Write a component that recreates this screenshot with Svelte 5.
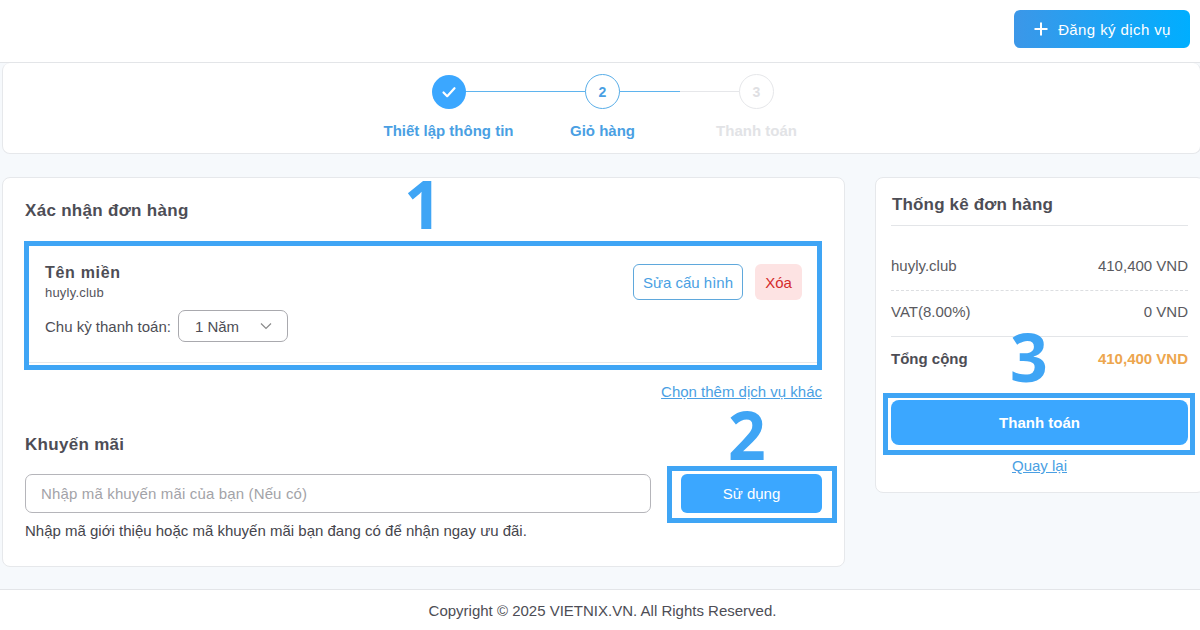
<script lang="ts">
	const steps = [
		{ label: 'Thiết lập thông tin', state: 'done', mark: '' },
		{ label: 'Giỏ hàng', state: 'active', mark: '2' },
		{ label: 'Thanh toán', state: 'todo', mark: '3' }
	];

	const rows = [
		{ name: 'huyly.club', value: '410,400 VND', dashed: true },
		{ name: 'VAT(8.00%)', value: '0 VND', dashed: false }
	];
</script>

<div class="page">
	<header class="topbar">
		<button class="register">
			<svg width="16" height="16" viewBox="0 0 16 16" aria-hidden="true">
				<path d="M8 1.5v13M1.5 8h13" stroke="#fff" stroke-width="2" fill="none" />
			</svg>
			<span>Đăng ký dịch vụ</span>
		</button>
	</header>

	<section class="stepper">
		{#each steps as step, i}
			<div class="step {step.state}">
				<div class="track">
					{#if i < steps.length - 1}
						<span class="line {step.state}"></span>
					{/if}
					<span class="circle">
						{#if step.state === 'done'}
							<svg width="16" height="16" viewBox="0 0 16 16" aria-hidden="true">
								<path d="M2.5 8.5l3.7 3.7 7.3-8" stroke="#fff" stroke-width="2.2" fill="none" stroke-linecap="round" stroke-linejoin="round" />
							</svg>
						{:else}
							{step.mark}
						{/if}
					</span>
				</div>
				<div class="step-label">{step.label}</div>
			</div>
		{/each}
	</section>

	<main class="content">
		<section class="card order">
			<h2 class="title">Xác nhận đơn hàng</h2>

			<div class="item">
				<div class="item-info">
					<h3>Tên miền</h3>
					<p class="domain">huyly.club</p>
					<div class="cycle">
						<span>Chu kỳ thanh toán:</span>
						<div class="select">
							<span>1 Năm</span>
							<svg width="12" height="8" viewBox="0 0 12 8" aria-hidden="true">
								<path d="M1 1.5l5 5 5-5" stroke="#8a8a8a" stroke-width="1.2" fill="none" />
							</svg>
						</div>
					</div>
				</div>
				<div class="item-actions">
					<button class="edit">Sửa cấu hình</button>
					<button class="remove">Xóa</button>
				</div>
			</div>

			<div class="more"><a href="#more">Chọn thêm dịch vụ khác</a></div>

			<h2 class="title promo-title">Khuyến mãi</h2>
			<div class="promo">
				<input type="text" placeholder="Nhập mã khuyến mãi của bạn (Nếu có)" />
				<button class="apply">Sử dụng</button>
			</div>
			<p class="hint">Nhập mã giới thiệu hoặc mã khuyến mãi bạn đang có để nhận ngay ưu đãi.</p>
		</section>

		<aside class="card summary">
			<h2 class="title summary-title">Thống kê đơn hàng</h2>
			{#each rows as row}
				<div class="row" class:dashed={row.dashed}>
					<span>{row.name}</span>
					<span>{row.value}</span>
				</div>
			{/each}
			<div class="row total">
				<span>Tổng cộng</span>
				<span class="amount">410,400 VND</span>
			</div>
			<button class="pay">Thanh toán</button>
			<div class="back"><a href="#back">Quay lại</a></div>
		</aside>
	</main>

	<footer class="footer">Copyright © 2025 VIETNIX.VN. All Rights Reserved.</footer>

	<div class="mark mark-1"></div>
	<div class="mark mark-2"></div>
	<div class="mark mark-3"></div>
	<span class="num num-1">1</span>
	<span class="num num-2">2</span>
	<span class="num num-3">3</span>
</div>

<style>
	:global(body) {
		margin: 0;
		background: #f6f9fc;
		overflow: hidden;
	}

	.page {
		position: relative;
		width: 1200px;
		height: 630px;
		overflow: hidden;
		font-family: 'Liberation Sans', Arial, sans-serif;
		color: #4d4d55;
		font-size: 15px;
	}

	button {
		font-family: inherit;
		cursor: pointer;
	}

	.topbar {
		box-sizing: border-box;
		background: #fff;
		border-bottom: 1px solid #e3e5e8;
		display: flex;
		justify-content: flex-end;
		padding: 10px 10px 0 0;
		height: 63px;
	}

	.register {
		width: 176px;
		height: 38px;
		border: none;
		border-radius: 6px;
		background: linear-gradient(90deg, #3c97e8, #00aeff);
		color: #fff;
		font-size: 15px;
		letter-spacing: 0.4px;
		display: flex;
		align-items: center;
		justify-content: center;
		gap: 9px;
		padding: 0;
	}

	.stepper {
		box-sizing: border-box;
		margin-left: 2px;
		width: 1199px;
		height: 91px;
		background: #fff;
		border: 1px solid #e6e8eb;
		border-top: none;
		border-radius: 8px;
		display: flex;
		justify-content: center;
		padding-top: 11px;
		padding-left: 2px;
	}

	.step {
		width: 154px;
		text-align: center;
	}

	.track {
		position: relative;
		height: 35px;
		display: flex;
		justify-content: center;
		align-items: center;
	}

	.circle {
		position: relative;
		box-sizing: border-box;
		width: 35px;
		height: 35px;
		border-radius: 50%;
		background: #fff;
		display: flex;
		align-items: center;
		justify-content: center;
		font-weight: 700;
		font-size: 14px;
	}

	.done .circle {
		width: 34px;
		height: 34px;
		background: #3ba7ff;
	}

	.active .circle {
		border: 1px solid #5aaee8;
		color: #4a9fe3;
	}

	.todo .circle {
		border: 1px solid #e6e7ea;
		color: #dfe0e3;
	}

	.line {
		position: absolute;
		left: 50%;
		width: 154px;
		top: 17px;
		height: 1px;
	}

	.line.done {
		background: #5fb4ee;
	}

	.line.active {
		background: linear-gradient(90deg, #5fb4ee 50%, #e6e7ea 50%);
	}

	.step-label {
		margin-top: 13px;
		font-weight: 700;
		font-size: 15px;
		color: #4a9fe3;
		white-space: nowrap;
	}

	.todo .step-label {
		color: #e2e3e6;
	}

	.content {
		display: grid;
		grid-template-columns: 843px 326px;
		gap: 30px;
		align-items: start;
		margin: 23px 0 0 2px;
	}

	.card {
		box-sizing: border-box;
		background: #fff;
		border: 1px solid #e6e8eb;
		border-radius: 8px;
	}

	.order {
		height: 390px;
		padding: 23px 22px 0 22px;
	}

	.title {
		margin: 0;
		font-size: 17px;
		line-height: 20px;
		font-weight: 700;
		letter-spacing: 0.3px;
		color: #4d4d55;
	}

	.item {
		margin: 26px 5px 0 4px;
		padding: 0 15px 0 16px;
		height: 116px;
		box-sizing: border-box;
		border-bottom: 1px solid #e6e8eb;
		display: flex;
		justify-content: space-between;
	}

	.item-info h3 {
		margin: 16px 0 0;
		font-size: 16px;
		line-height: 20px;
		letter-spacing: 0.7px;
		font-weight: 700;
	}

	.domain {
		margin: 2px 0 0;
		font-size: 13px;
		letter-spacing: 0.2px;
		line-height: 16px;
		color: #55555c;
	}

	.cycle {
		display: flex;
		align-items: center;
		gap: 7px;
		margin-top: 9px;
	}

	.select {
		box-sizing: border-box;
		width: 110px;
		height: 32px;
		border: 1px solid #a9a9ae;
		border-radius: 7px;
		display: flex;
		align-items: center;
		justify-content: space-between;
		padding: 0 15px 0 16px;
	}

	.item-actions {
		display: flex;
		gap: 12px;
		margin-top: 17px;
		align-items: flex-start;
	}

	.edit {
		width: 110px;
		height: 36px;
		background: #fff;
		border: 1px solid #5fa8dc;
		border-radius: 6px;
		color: #4a9fe3;
		font-size: 15px;
		padding: 0;
	}

	.remove {
		width: 47px;
		height: 36px;
		background: #fde3e3;
		border: none;
		border-radius: 6px;
		color: #d42c2c;
		font-size: 15px;
		padding: 0;
	}

	.more {
		text-align: right;
		margin-top: 21px;
		line-height: 16px;
	}

	a {
		color: #4a9fe3;
		font-size: 15px;
	}

	.promo-title {
		margin-top: 35px;
	}

	.promo {
		display: flex;
		justify-content: space-between;
		margin-top: 19px;
	}

	input {
		box-sizing: border-box;
		width: 626px;
		height: 39px;
		border: 1px solid #b5b5ba;
		border-radius: 7px;
		padding: 0 15px;
		font-family: inherit;
		font-size: 15px;
		letter-spacing: 0.15px;
		background: #fff;
		outline: none;
	}

	input::placeholder {
		color: #a3a3a8;
		opacity: 1;
	}

	.apply {
		width: 141px;
		height: 39px;
		background: #3ba7ff;
		border: none;
		border-radius: 6px;
		color: #fff;
		font-size: 15px;
		padding: 0;
	}

	.hint {
		margin: 10px 0 0;
		font-size: 15px;
		line-height: 16px;
		color: #45454c;
	}

	.summary {
		width: 330px;
		height: 316px;
		padding: 17px 15px 0 15px;
	}

	.summary-title {
		padding: 0 0 10px 1px;
		border-bottom: 1px solid #e3e5e8;
		width: 296px;
		letter-spacing: 0.15px;
	}

	.row {
		width: 297px;
		box-sizing: border-box;
		height: 46px;
		padding-bottom: 4px;
		display: flex;
		justify-content: space-between;
		align-items: center;
		border-bottom: 1px solid #e3e5e8;
		color: #5a5a60;
	}

	.summary-title + .row {
		margin-top: 19px;
	}

	.row.dashed {
		border-bottom: 1px dashed #dcdee1;
	}

	.row.total {
		border-bottom: none;
		font-weight: 700;
		color: #4d4d55;
	}

	.amount {
		color: #eda64e;
	}

	.pay {
		display: block;
		width: 297px;
		height: 45px;
		margin-top: 17px;
		background: #3ba7ff;
		border: none;
		border-radius: 8px;
		color: #fff;
		font-size: 15px;
		font-weight: 700;
		padding: 0;
	}

	.back {
		width: 297px;
		text-align: center;
		margin-top: 13px;
		line-height: 16px;
	}

	.footer {
		position: absolute;
		left: 0;
		right: 0;
		bottom: 0;
		height: 41px;
		background: #fff;
		border-top: 1px solid #e3e5e8;
		display: flex;
		align-items: center;
		justify-content: center;
		padding-left: 5px;
		font-size: 15px;
		color: #4d4d55;
		box-sizing: border-box;
	}

	.mark {
		position: absolute;
		box-sizing: border-box;
		border: 5px solid #3fa5f5;
	}

	.mark-1 {
		left: 24px;
		top: 241px;
		width: 798px;
		height: 129px;
	}

	.mark-2 {
		left: 667px;
		top: 466px;
		width: 170px;
		height: 57px;
	}

	.mark-3 {
		left: 883px;
		top: 393px;
		width: 312px;
		height: 62px;
	}

	.num {
		position: absolute;
		font-family: 'Open Sans', sans-serif;
		font-weight: 700;
		font-size: 66px;
		line-height: 48px;
		color: #3fa5f5;
	}

	.num-1 {
		left: 404px;
		top: 179px;
	}

	.num-2 {
		left: 728px;
		top: 410px;
	}

	.num-3 {
		left: 1010px;
		top: 332px;
	}
</style>
